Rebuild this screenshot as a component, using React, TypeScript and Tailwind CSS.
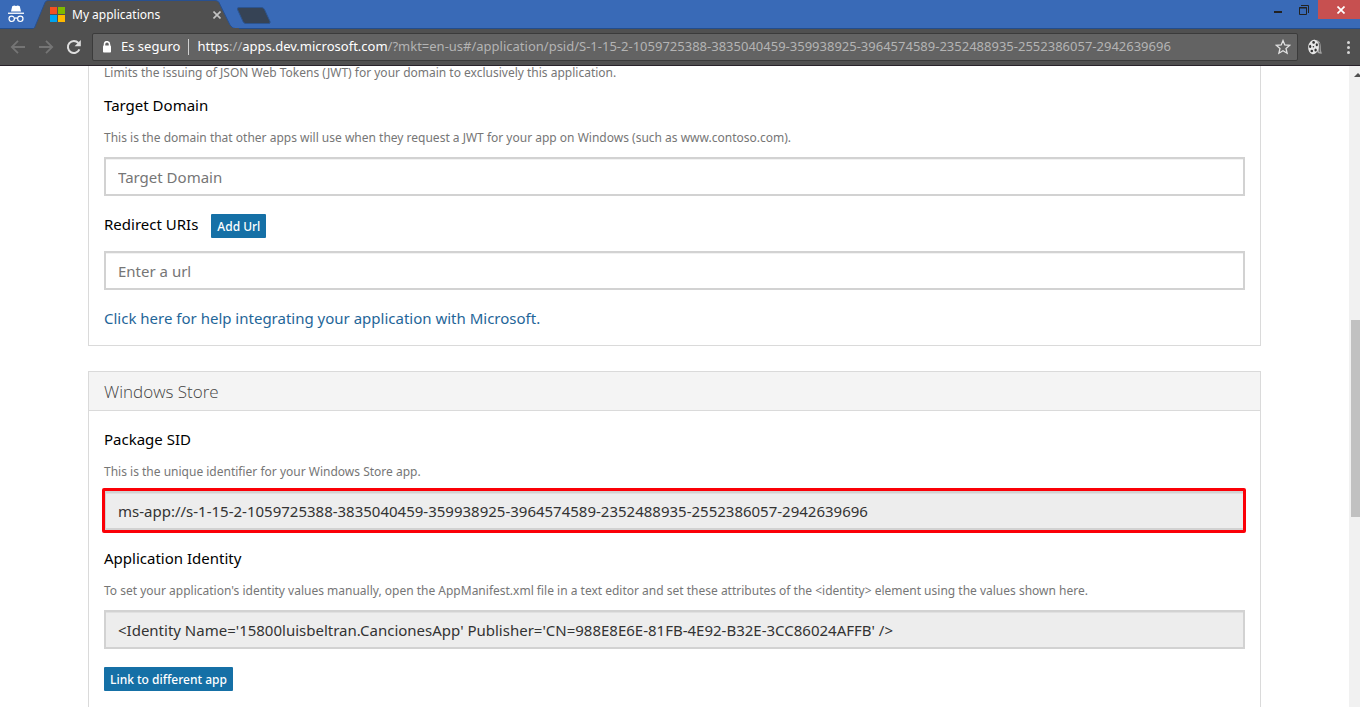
import type { ReactNode } from "react";

function IncognitoIcon() {
  return (
    <svg className="h-5 w-[18px]" viewBox="0 0 18 20" fill="none">
      <path d="M5.2 1.2 7.2.6 9 1.1l1.8-.5 2 .6 1.2 5.3H4z" fill="#fff" />
      <path d="M1 7.6h16v1.3H1z" fill="#fff" />
      <circle cx="4.7" cy="13.8" r="2.7" stroke="#fff" strokeWidth="1.2" />
      <circle cx="13.3" cy="13.8" r="2.7" stroke="#fff" strokeWidth="1.2" />
      <path d="M7.4 13.6c1-.8 2.2-.8 3.2 0" stroke="#fff" strokeWidth="1.2" />
    </svg>
  );
}

function MicrosoftLogo() {
  return (
    <svg className="h-[15px] w-[15px] shrink-0" viewBox="0 0 15 15">
      <path d="M0 0h7v7H0z" fill="#f25022" />
      <path d="M8 0h7v7H8z" fill="#7fba00" />
      <path d="M0 8h7v7H0z" fill="#00a4ef" />
      <path d="M8 8h7v7H8z" fill="#ffb900" />
    </svg>
  );
}

function ArrowIcon({ forward = false }: { forward?: boolean }) {
  return (
    <svg className="h-4 w-4" viewBox="0 0 16 16" fill="none" stroke="#757575" strokeWidth="1.8">
      <path d={forward ? "M1 8h13M8 1.8 14.2 8 8 14.2" : "M15 8H2M8 1.8 1.8 8 8 14.2"} />
    </svg>
  );
}

function ReloadIcon() {
  return (
    <svg className="h-4 w-4" viewBox="0 0 16 16" fill="none">
      <path d="M13.4 10.4A6 6 0 1 1 12.4 4" stroke="#dedede" strokeWidth="2" />
      <path d="M14.8 1v6.2H8.6z" fill="#dedede" />
    </svg>
  );
}

function LockIcon() {
  return (
    <svg className="h-3 w-2.5 shrink-0" viewBox="0 0 10 12" fill="none">
      <path d="M2.5 5V3.2a2.5 2.5 0 0 1 5 0V5" stroke="#fff" strokeWidth="1.5" />
      <rect x="1" y="4.6" width="8" height="6.9" rx=".8" fill="#fff" />
    </svg>
  );
}

function StarIcon() {
  return (
    <svg className="h-4 w-4" viewBox="0 0 16 16" fill="none">
      <path
        d="m8 1.6 1.8 4.4 4.8.4-3.6 3.1 1.1 4.7L8 11.7l-4.1 2.5L5 9.5 1.4 6.4 6.2 6z"
        stroke="#e2e2e2"
        strokeWidth="1.3"
      />
    </svg>
  );
}

function FilmReelIcon() {
  return (
    <svg className="h-4 w-4" viewBox="0 0 16 16">
      <path d="M7 .8c5.500 0 6.800 3.200 6.800 7 0 3.200.2 5.400 1.400 6.800-2.600.4-4.200-.4-5.200-1.800z" fill="#a2a2a2" />
      <path d="M12.600 4v9" stroke="#5a5a5a" strokeWidth=".8" />
      <ellipse cx="6.500" cy="8" rx="5.300" ry="7.200" fill="#e6e6e6" transform="rotate(8 6.500 8)" />
      <g fill="#333">
        <circle cx="6.400" cy="7.800" r=".8" />
        <ellipse cx="6.600" cy="3.400" rx="1.300" ry="1.300" />
        <ellipse cx="9.800" cy="5.800" rx="1.100" ry="1.500" />
        <ellipse cx="8.600" cy="11" rx="1.200" ry="1.500" />
        <ellipse cx="4.800" cy="12" rx="1.300" ry="1.300" />
        <ellipse cx="3.200" cy="7.400" rx="1.100" ry="1.600" />
      </g>
    </svg>
  );
}

function TabStrip() {
  return (
    <header className="flex h-[29px] items-start border-b border-[#234d8c] bg-[#396ab7]">
      <div className="flex w-8 shrink-0 justify-center pt-[5px]">
        <IncognitoIcon />
      </div>
      <div className="relative h-[29px] w-[208px] shrink-0">
        <svg className="absolute inset-0 h-full w-full" viewBox="0 0 208 29" preserveAspectRatio="none">
          <path d="M2 29 13 2.500Q14 .5 16 .5H183Q186 .5 187 2.500L198 25Q200 29 206 29z" fill="#505050" stroke="#28508f" />
          <path d="M1.500 29H207" stroke="#505050" strokeWidth="2" />
        </svg>
        <div className="relative flex h-full items-center gap-[7px] pr-[15px] pl-[18px]">
          <MicrosoftLogo />
          <span className="flex-1 text-xs text-white">My applications</span>
          <button aria-label="Close tab" className="flex h-4 w-4 items-center justify-center">
            <svg className="h-2 w-2" viewBox="0 0 8 8" stroke="#c4c4c4" strokeWidth="1.600">
              <path d="m.5.5 7 7m0-7-7 7" />
            </svg>
          </button>
        </div>
      </div>
      <button aria-label="New tab" className="-ml-1 shrink-0 pt-[7px]">
        <svg className="h-[17px] w-[35px]" viewBox="0 0 35 17">
          <path d="M3 .5H25.500Q27.500.5 28.500 2.500L34 14.500Q34.500 16.500 33 16.500H9.500Q8 16.500 7 14.500L1.500 2.500Q1 .5 3 .5z" fill="#364355" stroke="#2c548f" />
        </svg>
      </button>
      <div className="ml-auto flex h-[19px]">
        <button aria-label="Minimize" className="flex w-6 items-end justify-center pb-1.5">
          <span className="h-0.5 w-2 bg-[#222]" />
        </button>
        <button aria-label="Restore" className="flex w-7 items-center justify-center">
          <svg className="h-2.5 w-2.5" viewBox="0 0 10 10" fill="none" stroke="#222">
            <path d="M2 .5h7.500V8" />
            <path d="M.5 2.500h7v7h-7z" />
            <path d="M0 3h8" />
          </svg>
        </button>
        <button aria-label="Close" className="flex w-[42px] items-center justify-center bg-[#c75050] pl-1">
          <svg className="h-2 w-2" viewBox="0 0 8 8" stroke="#fff" strokeWidth="1.700">
            <path d="m.5.5 7 7m0-7-7 7" />
          </svg>
        </button>
      </div>
    </header>
  );
}

function Toolbar() {
  return (
    <div className="flex h-[37px] items-center border-b border-[#28222a] bg-[#505050]">
      <nav className="flex gap-3 pr-2.5 pl-2.5">
        <button aria-label="Back">
          <ArrowIcon />
        </button>
        <button aria-label="Forward">
          <ArrowIcon forward />
        </button>
        <button aria-label="Reload">
          <ReloadIcon />
        </button>
      </nav>
      <div className="flex h-7 min-w-0 flex-1 items-center rounded-xs border border-[#3b3b3b] bg-[#636363] pr-1.5 pl-[9px] text-[13px] text-white">
        <LockIcon />
        <span className="ml-[9px] shrink-0">Es seguro</span>
        <span className="mx-2 h-4 w-px shrink-0 bg-[#d0d0d0]" />
        <div role="textbox" aria-label="Address" className="min-w-0 flex-1 truncate text-[#b4b4b4]">
          <span className="text-white">https</span>://
          <span className="text-white">apps.dev.microsoft.com</span>
          /?mkt=en-us#/application/psid/S-1-15-2-1059725388-3835040459-359938925-3964574589-2352488935-2552386057-2942639696
        </div>
        <button aria-label="Bookmark">
          <StarIcon />
        </button>
      </div>
      <button aria-label="Movie extension" className="ml-[9px]">
        <FilmReelIcon />
      </button>
      <button aria-label="Menu" className="mr-2.5 ml-6 flex flex-col gap-0.5">
        <span className="h-[3px] w-[3px] rounded-full bg-[#d6d6d6]" />
        <span className="h-[3px] w-[3px] rounded-full bg-[#d6d6d6]" />
        <span className="h-[3px] w-[3px] rounded-full bg-[#d6d6d6]" />
      </button>
    </div>
  );
}

function Hint({ children }: { children: ReactNode }) {
  return <p className="text-xs leading-5 text-[#767676]">{children}</p>;
}

function Field({
  id,
  label,
  hint,
  value,
  placeholder,
  highlighted = false,
}: {
  id: string;
  label: string;
  hint: string;
  value?: string;
  placeholder?: string;
  highlighted?: boolean;
}) {
  return (
    <div>
      <label htmlFor={id} className="block leading-5 text-black">
        {label}
      </label>
      <div className="mt-[13px] mb-[9px]">
        <Hint>{hint}</Hint>
      </div>
      <div className="relative">
        <TextBox id={id} value={value} placeholder={placeholder} />
        {highlighted && (
          <span className="pointer-events-none absolute -inset-y-[3px] -right-px -left-0.5 rounded-xs border-3 border-[#fb0007]" />
        )}
      </div>
    </div>
  );
}

function TextBox({ id, value, placeholder }: { id: string; value?: string; placeholder?: string }) {
  const locked = value !== undefined;
  return (
    <input
      id={id}
      type="text"
      defaultValue={value}
      placeholder={placeholder}
      readOnly={locked}
      className={
        locked
          ? "block h-[39px] w-full border-2 border-[#d2d2d2] bg-[#ededed] px-3 text-[#333] inset-shadow-2xs"
          : "block h-[39px] w-full border-2 border-[#d2d2d2] bg-white px-3 text-[#333] inset-shadow-2xs placeholder:text-[#767676]"
      }
    />
  );
}

function SmallButton({ children }: { children: ReactNode }) {
  return (
    <button className="h-6 rounded-[1px] bg-[#1570a6] px-1.5 pt-px text-xs font-medium text-white">{children}</button>
  );
}

export default function App() {
  return (
    <div className="flex h-screen flex-col overflow-hidden bg-white font-['Noto_Sans','Open_Sans',sans-serif]">
      <TabStrip />
      <Toolbar />
      <div className="flex min-h-0 flex-1">
        <main className="min-w-0 flex-1 overflow-hidden px-[88px] text-[15px]">
          <section className="-mt-[3px] border border-t-0 border-[#dadada] px-[15px] pb-[17px]">
            <Hint>Limits the issuing of JSON Web Tokens (JWT) for your domain to exclusively this application.</Hint>
            <div className="mt-3">
              <Field
                id="target-domain"
                label="Target Domain"
                hint="This is the domain that other apps will use when they request a JWT for your app on Windows (such as www.contoso.com)."
                placeholder="Target Domain"
              />
            </div>
            <div className="mt-[18px] mb-[13px] flex items-start gap-[13px]">
              <label htmlFor="redirect-uri" className="leading-5 text-black">
                Redirect URIs
              </label>
              <SmallButton>Add Url</SmallButton>
            </div>
            <TextBox id="redirect-uri" placeholder="Enter a url" />
            <a href="#help" className="mt-[18px] block leading-5 text-[#1f6699]">
              Click here for help integrating your application with Microsoft.
            </a>
          </section>

          <section className="mt-[25px] border border-[#dadada]">
            <h2 className="h-[39px] border-b border-[#dadada] bg-[#f4f4f4] px-[15px] font-['Open_Sans'] text-[17px] leading-10 font-light text-[#444]">
              Windows Store
            </h2>
            <div className="flex flex-col gap-[18px] px-[15px] pt-[18px] pb-10">
              <Field
                id="package-sid"
                label="Package SID"
                hint="This is the unique identifier for your Windows Store app."
                value="ms-app://s-1-15-2-1059725388-3835040459-359938925-3964574589-2352488935-2552386057-2942639696"
                highlighted
              />
              <Field
                id="application-identity"
                label="Application Identity"
                hint="To set your application's identity values manually, open the AppManifest.xml file in a text editor and set these attributes of the <identity> element using the values shown here."
                value="<Identity Name='15800luisbeltran.CancionesApp' Publisher='CN=988E8E6E-81FB-4E92-B32E-3CC86024AFFB' />"
              />
              <div className="flex">
                <SmallButton>Link to different app</SmallButton>
              </div>
            </div>
          </section>
        </main>
        <div className="flex w-[11px] shrink-0 flex-col items-end overflow-hidden bg-[#f1f1f1]">
          <svg className="mt-[7px] h-1 w-1.5" viewBox="0 0 6 4">
            <path d="M0 4 4 0l2 2v2z" fill="#505050" />
          </svg>
          <div className="mt-[243px] h-[197px] w-[9px] bg-[#c1c1c1]" />
        </div>
      </div>
    </div>
  );
}
